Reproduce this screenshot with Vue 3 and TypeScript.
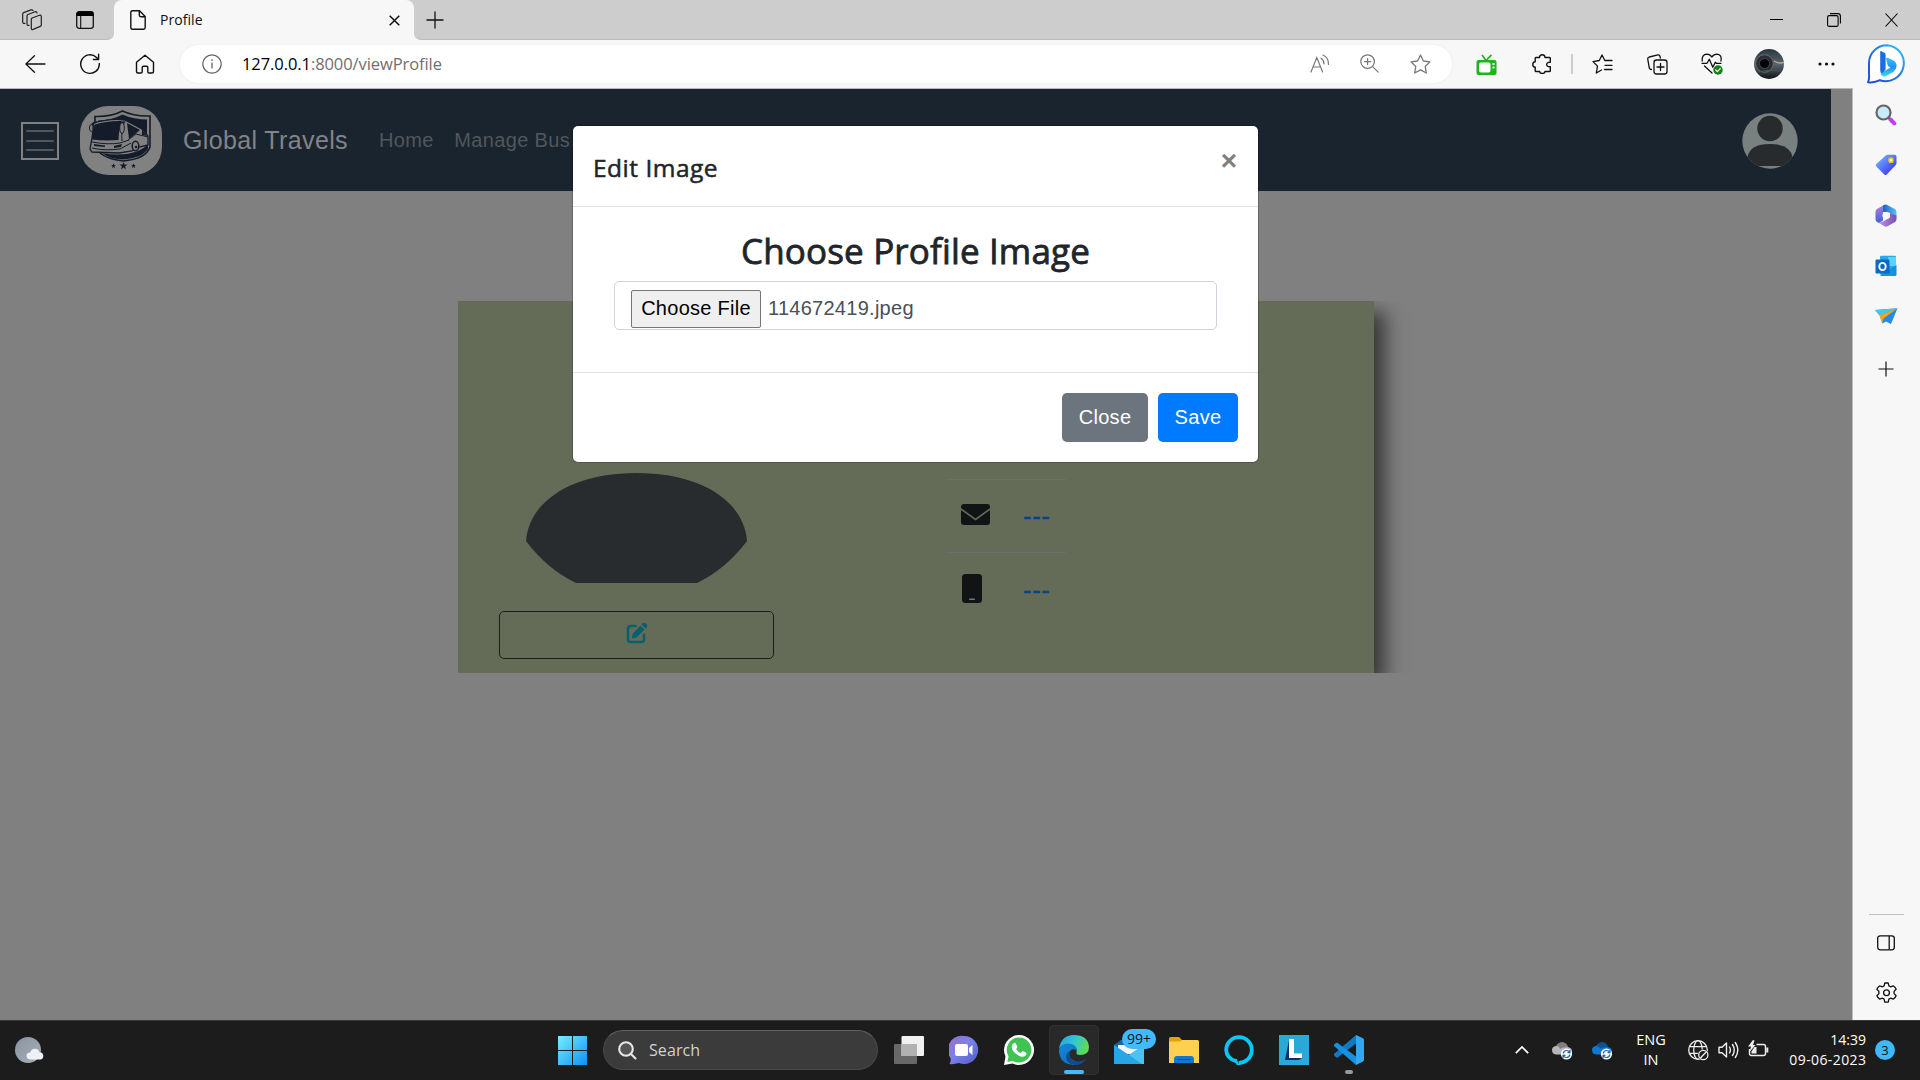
<script setup lang="ts">
interface ContactRow {
  icon: 'mail' | 'phone'
  value: string
}

const contacts: ContactRow[] = [
  { icon: 'mail', value: '---' },
  { icon: 'phone', value: '---' },
]
const navLinks: string[] = ['Home', 'Manage Bus']
const fileName = '114672419.jpeg'
</script>

<template>
  <div class="screen">
    <header class="tabstrip">
      <div class="strip-left">
        <svg class="i-spaces" width="22" height="22" viewBox="0 0 22 22" fill="none" stroke="#222" stroke-width="1.2" stroke-linejoin="round" stroke-linecap="round">
          <path d="M10.500 9.300l8-3q1.800-.5 1.800 1.200v8.500q0 1-1 1.400l-7.200 3q-1.800.6-1.800-1.200v-8.500q0-1 .8-1.400z" />
          <path d="M8 16.300q-2 .4-2-1.200V7q0-1 1-1.500l7-2.700q1.800-.5 2 1.200" />
          <path d="M4 14.300q-2.300.6-2.300-1.300V5q0-1 1-1.400L10 .900q1.500-.4 2 .7" />
        </svg>
        <svg class="i-tabs" width="18" height="18" viewBox="0 0 18 18">
          <rect x=".7" y=".7" width="16.600" height="16.600" rx="2.500" fill="none" stroke="#111" stroke-width="1.300" />
          <path d="M.5 5V3Q.5.500 3 .5h12q2.500 0 2.500 2.500v2z" fill="#000" />
          <path d="M4.700 5v12" stroke="#111" stroke-width="1.100" />
        </svg>
      </div>
      <div class="tab">
        <div class="tab-body">
          <svg width="16" height="20" viewBox="0 0 16 20" fill="none" stroke="#111" stroke-width="1.400" stroke-linejoin="round">
            <path d="M2.500.8h7L15.200 6.500V17.500q0 1.700-1.700 1.700h-11Q.8 19.200.8 17.500V2.500Q.8.800 2.500.8zM9.300.8v4.200q0 1.700 1.700 1.700h4.200" />
          </svg>
          <span class="tab-title">Profile</span>
          <svg class="tab-x" width="11" height="11" viewBox="0 0 11 11" stroke="#111" stroke-width="1.500"><path d="M.7.700l9.600 9.600M10.300.7L.7 10.300" /></svg>
        </div>
      </div>
      <div class="strip-right">
        <svg class="i-plus" width="18" height="18" viewBox="0 0 18 18" stroke="#111" stroke-width="1.300"><path d="M9 .5v17M.5 9h17" /></svg>
        <div class="window-buttons">
          <svg width="13" height="13" viewBox="0 0 13 13" stroke="#000"><path d="M0 6.500h13" /></svg>
          <svg width="14" height="14" viewBox="0 0 14 14" fill="none" stroke="#000" stroke-width="1.100"><rect x=".6" y="2.600" width="10.500" height="10.800" rx="1.500" /><path d="M3 .6h8q2.400 0 2.400 2.400v7.500" /></svg>
          <svg width="13" height="14" viewBox="0 0 13 14" stroke="#000" stroke-width="1.100"><path d="M.5.500l12 13M12.500.5l-12 13" /></svg>
        </div>
      </div>
    </header>

    <div class="toolbar">
      <svg class="t-back" width="21" height="18" viewBox="0 0 21 18" fill="none" stroke="#111" stroke-width="1.300" stroke-linecap="round" stroke-linejoin="round"><path d="M9.500.7L.9 9l8.600 8.300M1 9h19" /></svg>
      <svg class="t-reload" width="22" height="22" viewBox="0 0 22 22" fill="none" stroke="#111" stroke-width="1.400" stroke-linecap="round" stroke-linejoin="round"><path d="M20.300 10.500A9.300 9.300 0 1 1 17.500 4.400L19.500 6.300M19.600 1.300v5.200h-5.200" /></svg>
      <svg class="t-home" width="20" height="20" viewBox="0 0 20 20" fill="none" stroke="#111" stroke-width="1.400" stroke-linejoin="round"><path d="M10 1.200L1.500 8.300v9.200q0 1.500 1.500 1.500h3q1.200 0 1.200-1.200v-4.300q0-1.300 1.300-1.300h3q1.300 0 1.300 1.300v4.300q0 1.200 1.200 1.200h3q1.500 0 1.500-1.500V8.300z" /></svg>
      <div class="address">
        <svg class="a-info" width="20" height="20" viewBox="0 0 20 20" fill="none" stroke="#666" stroke-width="1.300"><circle cx="10" cy="10" r="9.200" /><path d="M10 8.500v6M10 5.300v1.700" /></svg>
        <span class="url"><b>127.0.0.1</b>:8000/viewProfile</span>
        <div class="address-icons">
          <svg width="20" height="20" viewBox="0 0 20 20" fill="none" stroke="#777" stroke-width="1.200" stroke-linecap="round"><path d="M1 18L6.800 3.500 12.600 18M3.300 13h7M11 4.200q3 1.800 3 5.800M13 1q5.800 2.500 5.500 9.500" /></svg>
          <svg width="19" height="19" viewBox="0 0 19 19" fill="none" stroke="#777" stroke-width="1.200" stroke-linecap="round"><circle cx="7.600" cy="7.600" r="6.800" /><path d="M12.700 12.700L18.200 18.200M7.600 4.500v6.200M4.500 7.600h6.200" /></svg>
          <svg width="21" height="20" viewBox="0 0 21 20" fill="none" stroke="#777" stroke-width="1.300" stroke-linejoin="round"><path d="M10.500 1l2.900 6 6.500.9-4.700 4.600 1.100 6.500-5.800-3.100L4.700 19l1.100-6.500L1.100 7.900 7.600 7z" /></svg>
        </div>
      </div>
      <div class="extensions">
        <svg class="e-tv" width="21" height="21" viewBox="0 0 21 21"><path d="M6 1l4 5.500L15.500.8" fill="none" stroke="#1db51d" stroke-width="1.700" /><rect x=".5" y="6" width="20" height="15" rx="2" fill="#1db51d" /><rect x="3" y="8.500" width="11.500" height="10" rx="2" fill="#fff" /><path d="M16.500 10h2M16.500 13.500h2" stroke="#fff" stroke-width="2" /></svg>
        <svg class="e-puzzle" width="20" height="20" viewBox="0 0 20 20" fill="none" stroke="#111" stroke-width="1.400" stroke-linejoin="round"><path d="M4 3.500h3.500Q7.500.8 10.200.8T13 3.500h4.500q.8 0 .8.800v4q-3.600-.2-3.600 2.200t3.600 2.200v4q0 .8-.8.800H13q0 2-2.700 2t-2.700-2H4q-.8 0-.8-.8v-3.500Q.8 13 .8 10.400t2.400-2.600V4.300q0-.8.800-.8z" /></svg>
        <span class="e-divider"></span>
        <svg class="e-fav" width="21" height="20" viewBox="0 0 21 20" fill="none" stroke="#111" stroke-width="1.300" stroke-linejoin="round" stroke-linecap="round"><path d="M20 6.500h-7.200L10 1 7.300 6.500 1 7.600l4.500 4.500L4.300 19l5.200-3M13 11.300h7M12.500 15.500H20" /></svg>
        <svg class="e-coll" width="21" height="21" viewBox="0 0 21 21" fill="none" stroke="#111" stroke-width="1.300" stroke-linecap="round"><path d="M4.500 15.500q-1.700 0-2.200-1.500L.8 5.300Q.500 3.500 2.200 3L11 .8q1.500-.2 2 1.500l.4 1.800" /><rect x="7" y="6" width="13" height="14" rx="2.500" /><path d="M13.500 9.500v7M10 13h7" /></svg>
        <svg class="e-heart" width="22" height="22" viewBox="0 0 22 22" fill="none" stroke="#111" stroke-width="1.300" stroke-linecap="round" stroke-linejoin="round"><path d="M1.200 8Q.5 1.500 5.800 1.200 9 1.200 10.800 4 12.800 1.200 16 1.200 21.200 1.800 20 8M1 10.300h5l2.300-4 3.500 8 2.500-5 1 1H20M3.500 13l7.500 7" /><circle cx="17" cy="17" r="4.700" fill="#128012" stroke="none" /><path d="M14.800 17l1.600 1.600 2.800-3" stroke="#fff" /></svg>
        <svg class="e-avatar" width="30" height="30" viewBox="0 0 30 30">
          <defs><linearGradient id="lens" x1="0" y1="0" x2="0" y2="1"><stop offset="0" stop-color="#293640" /><stop offset=".5" stop-color="#59666d" /><stop offset="1" stop-color="#101519" /></linearGradient></defs>
          <circle cx="15" cy="15" r="15" fill="url(#lens)" /><circle cx="10.500" cy="14.500" r="8.800" fill="#2b2e32" stroke="#6e6b69" /><circle cx="10.500" cy="14.500" r="5" fill="#020305" stroke="#445" /><path d="M20 12q4 3 10 1.500" stroke="#b2a58d" fill="none" stroke-width="1.500" /><path d="M3 23Q15 20 28 22" stroke="#45525b" fill="none" />
        </svg>
        <svg class="e-dots" width="17" height="4" viewBox="0 0 17 4" fill="#111"><circle cx="2" cy="2" r="1.600" /><circle cx="8.500" cy="2" r="1.600" /><circle cx="15" cy="2" r="1.600" /></svg>
        <svg class="e-bing" width="39" height="40" viewBox="0 0 39 40">
          <defs><linearGradient id="bing" x1="0" y1="1" x2="1" y2="0"><stop offset="0" stop-color="#2449d6" /><stop offset=".5" stop-color="#1d72e8" /><stop offset="1" stop-color="#35c8f0" /></linearGradient><linearGradient id="bingb" x1="0" y1="0" x2="0" y2="1"><stop offset="0" stop-color="#35c4f0" /><stop offset=".5" stop-color="#2591ee" /><stop offset="1" stop-color="#35dce8" /></linearGradient></defs>
          <path d="M20 1.200A18 18 0 1 1 13 36.200Q7 39 1.200 38.200 2.500 34 2 30V19A18 18 0 0 1 20 1.200z" fill="#fff" stroke="url(#bing)" stroke-width="2" />
          <path d="M19 14.800q0-1.600 1.600-1l6 2.600q3 2 3 5.500-.3 3.600-3 5.800l-8 4.600q-3 1-4.500-1.500l-.6-3 4.500-1 5.500-3.300-2.600-1.500z" fill="url(#bingb)" />
          <path d="M13.200 8q0-1.300 1.300-.8l3.200 1.800q.9.500.9 1.700V25.500l-3.600 3.800q-1.800-1-1.800-3.300z" fill="#1b6ce4" />
        </svg>
      </div>
    </div>

    <div class="browser">
      <main class="page">
        <nav class="navbar">
          <div class="menu"><i></i><i></i><i></i></div>
          <svg class="logo" width="82" height="69" viewBox="0 0 82 69">
            <rect width="82" height="69" rx="28" fill="#818181" />
            <path d="M15 16V10.500Q31 11 42.500 5 54 10.500 70 10v31Q66 53 43 55 27 53 20 47" fill="none" stroke="#151c29" stroke-width="1.600" />
            <path d="M18 14.500Q31 14.500 42.500 8.500 54 13.500 67 13.500V40l-9-15-18-9-22 1z" fill="#151c29" />
            <path d="M22 47q20 4 36-2 6-2.500 10-7v5q-6 9-25 10.500Q30 53 22 47z" fill="#151c29" />
            <path d="M14 17Q30 12 45 14l17 9 6 7v9l-9 2-7 4-13 2-27-1-2-3 2-11z" fill="#818181" stroke="#151c29" stroke-width="1.300" />
            <path d="M15 18.500q12-4 27-3.500-3 6-3.500 19Q25 35 12 33.500q0-9 3-15z" fill="#151c29" />
            <path d="M47 17l13 7-11 9zM62 24l5 6-5-1z" fill="#151c29" />
            <path d="M45 15q-4 8-3 20M48 34l8-6 12 3M12 36q16 3 28 1l9-3M12 42q12 3 28 1l11-6" fill="none" stroke="#151c29" stroke-width="1" />
            <path d="M14 38l11 1.500v1.500l-11-1zM34 40l8-2-1 3-7 1z" fill="#151c29" />
            <ellipse cx="55.500" cy="40" rx="3.300" ry="4.800" fill="#818181" stroke="#151c29" stroke-width="1.500" /><circle cx="56" cy="41" r="1.300" fill="#151c29" />
            <path d="M17 16q-6 0-6 7.500M44 16q-5 0-4 8" fill="none" stroke="#151c29" stroke-width="1.600" />
            <ellipse cx="11.300" cy="22" rx="1.800" ry="3.500" fill="#818181" stroke="#151c29" /><ellipse cx="42" cy="22" rx="2.300" ry="5.500" fill="#818181" stroke="#151c29" />
            <path d="M43.500 56l1 2.500h3l-2.400 1.900.9 3-2.500-1.800-2.500 1.800.9-3-2.400-1.900h3zM33.500 57.300l.6 1.600H36l-1.500 1.200.5 1.900-1.500-1.100-1.500 1.100.5-1.900-1.500-1.200h1.900zM53.500 57.300l.6 1.600H56l-1.500 1.200.5 1.900-1.500-1.100-1.500 1.100.5-1.900-1.500-1.200h1.900z" fill="#151c29" />
          </svg>
          <span class="brand">Global Travels</span>
          <a v-for="link in navLinks" :key="link" class="nav-link">{{ link }}</a>
          <svg class="user" width="56" height="56" viewBox="0 0 56 56">
            <defs><clipPath id="round"><circle cx="28" cy="28" r="27.700" /></clipPath></defs>
            <g clip-path="url(#round)"><rect width="56" height="56" fill="#788080" /><circle cx="28" cy="15.500" r="12.700" fill="#282b2e" /><path d="M5.500 53V44Q8 31 28 31t22.500 13v9z" fill="#282b2e" /></g>
          </svg>
        </nav>

        <div class="profile-wrap">
          <section class="profile">
            <div class="photo-col">
              <svg class="photo" width="221" height="110" viewBox="0 0 221 110"><path d="M0 68C3 28 46 0 110.500 0S218 28 221 68Q200 96 171 110H50Q21 96 0 68z" fill="#282c2f" /></svg>
              <div class="edit">
                <svg width="22" height="22" viewBox="0 0 22 22"><path d="M9.500 4H4.800Q2 4 2 6.800v10.400Q2 20 4.800 20h10.400q2.800 0 2.800-2.800v-4.500" fill="none" stroke="#07606f" stroke-width="2.500" stroke-linecap="round" /><path d="M14.500 3.500l4 4-8 8-4.700 1 1-4.800z" fill="#07606f" /><path d="M15.500 2.500l1.200-1.200q1.500-1.300 3 0l1 1q1.300 1.500 0 3l-1.200 1.200z" fill="#07606f" /></svg>
              </div>
            </div>
            <div class="contact-col">
              <div v-for="row in contacts" :key="row.icon" class="contact" :class="row.icon">
                <svg v-if="row.icon === 'mail'" width="29" height="21" viewBox="0 0 29 21" fill="#121314"><path d="M3 0h23q3 0 3 3v1L14.500 14.500 0 4V3Q0 0 3 0z" /><path d="M0 6l14.500 10.500L29 6v12q0 3-3 3H3q-3 0-3-3z" /></svg>
                <svg v-else width="20" height="29" viewBox="0 0 20 29"><rect width="20" height="29" rx="3.500" fill="#121314" /><rect x="7" y="24.500" width="6" height="1.500" rx=".7" fill="#777c6b" /></svg>
                <span>{{ row.value }}</span>
              </div>
            </div>
          </section>
        </div>

        <div class="modal">
          <div class="modal-head"><h5>Edit Image</h5><span class="modal-x">×</span></div>
          <div class="modal-body">
            <h3><span>Choose Profile Image</span></h3>
            <div class="file"><span class="file-btn">Choose File</span><span class="file-name">{{ fileName }}</span></div>
          </div>
          <div class="modal-foot"><button class="btn grey">Close</button><button class="btn blue">Save</button></div>
        </div>
      </main>

      <aside class="sidebar">
        <svg width="22" height="22" viewBox="0 0 22 22"><path d="M13 13l3 3" stroke="#555" stroke-width="2.500" /><path d="M15.500 15.500l3.800 3.800" stroke="#c23cf0" stroke-width="4" stroke-linecap="round" /><circle cx="8.500" cy="8.500" r="7" fill="#c7ebfb" stroke="#666" stroke-width="2.200" /></svg>
        <svg width="22" height="22" viewBox="0 0 22 22"><defs><linearGradient id="tag" x1="0" y1="0" x2="1" y2="1"><stop offset=".1" stop-color="#74b4ff" /><stop offset=".8" stop-color="#4040f4" /></linearGradient></defs><path d="M11 1.300Q11.600.7 13 .7h6.500q2 0 2 2V9q0 1.200-.8 2l-9 9.500q-1.200 1-2.400 0l-8-8q-1-1.200 0-2.400z" fill="url(#tag)" /><circle cx="16" cy="6.200" r="2" fill="#fff" stroke="#f6c51b" stroke-width="1.700" /></svg>
        <svg width="22" height="23" viewBox="0 0 22 23"><defs><linearGradient id="m1" x1="0" y1="0" x2="0" y2="1"><stop offset="0" stop-color="#b07ae0" /><stop offset="1" stop-color="#3f62d6" /></linearGradient><linearGradient id="m2"><stop offset="0" stop-color="#225ec4" /><stop offset="1" stop-color="#52c8f3" /></linearGradient><linearGradient id="m3"><stop offset="0" stop-color="#c58be8" /><stop offset="1" stop-color="#7251ae" /></linearGradient></defs><path d="M8 1.500L2 5Q.5 6 .5 8v7q0 2 1.500 3l2 1 4-2.500V9z" fill="url(#m1)" /><path d="M8 1.500q2.500-1.800 5 0L20 5q1.500 1 1.500 3v5L14 8.500 8 8z" fill="url(#m2)" /><path d="M21.500 11.500V15q0 2-1.500 3l-7 4q-2 1.300-4 0l-5-3 4-1.500 7-4V9z" fill="url(#m3)" /><circle cx="11" cy="11.500" r="3.600" fill="#f7f7f7" /></svg>
        <svg width="22" height="22" viewBox="0 0 22 22"><rect x="5" y=".7" width="16" height="19" rx="1" fill="#29a9e8" /><path d="M13 2h8v9h-8z" fill="#57d4fb" /><path d="M5 20.500L21.500 10v9.500q0 1.500-1.500 1.500H6z" fill="#1591df" /><rect x=".5" y="4.500" width="14" height="14" rx="1.200" fill="#0c6ac3" /><ellipse cx="7.500" cy="11.500" rx="3.200" ry="3.600" fill="none" stroke="#fff" stroke-width="1.900" /></svg>
        <svg width="23" height="16" viewBox="0 0 23 16"><path d="M0 2L22.500.2 16 16l-5-2.500-3.500 2L5 8z" fill="#2589e8" /><path d="M0 2L22.500.2 5 7.500z" fill="#44c8f2" /><path d="M22.500.2L4.500 7.500 7 15.500l1.500-5z" fill="#f2a51d" /></svg>
        <svg width="16" height="16" viewBox="0 0 16 16" stroke="#111" stroke-width="1.200"><path d="M8 .5v15M.5 8h15" /></svg>
        <div class="side-bottom">
          <hr />
          <svg width="18" height="16" viewBox="0 0 18 16" fill="none" stroke="#111" stroke-width="1.300"><rect x=".7" y=".8" width="16.600" height="14" rx="2.500" /><path d="M12.200 1v13.500" /></svg>
          <svg width="21" height="22" viewBox="0 0 21 22" fill="none" stroke="#111" stroke-width="1.300" stroke-linejoin="round"><path d="M8.800 1h3.400l.7 2.900 1.600.9 2.900-.9 1.700 1.600 1 1.700-2 2.200v2.200l2 2.200-1 1.800-1.700 1.500-2.900-.9-1.600.9-.7 3H8.800l-.7-3-1.600-.9-2.900.9-1.700-1.500-1-1.800 2-2.200V9.400l-2-2.200 1-1.700 1.700-1.600 2.900.9 1.600-.9z" /><circle cx="10.500" cy="10.700" r="2.900" /></svg>
        </div>
      </aside>
    </div>

    <footer class="taskbar">
      <svg class="weather" width="29" height="27" viewBox="0 0 29 27"><defs><linearGradient id="moon" x1="0" y1="0" x2="1" y2="1"><stop offset="0" stop-color="#8793a0" /><stop offset="1" stop-color="#a8b1ba" /></linearGradient></defs><circle cx="13" cy="13" r="13" fill="url(#moon)" /><path d="M15 22.500q-3.500-.5-3.500-3.700 0-3 3.600-3.300 1.400-4 5-3.800 3.400 0 4.300 3.500 3.900.3 3.900 3.700 0 3-3 3.600z" fill="#eef2f6" /></svg>
      <div class="apps">
        <svg class="win" width="29" height="29" viewBox="0 0 29 29"><defs><linearGradient id="win" x1="0" y1="0" x2="1" y2="1"><stop offset="0" stop-color="#76eeff" /><stop offset="1" stop-color="#0c91f5" /></linearGradient></defs><path d="M0 0h14v14H0zM15 0h14v14H15zM0 15h14v14H0zM15 15h14v14H15z" fill="url(#win)" /></svg>
        <div class="search">
          <svg width="19" height="19" viewBox="0 0 19 19" fill="#555" stroke="#e6e6e6" stroke-width="2.100" stroke-linecap="round"><circle cx="8" cy="8" r="6.800" /><path d="M13 13l4.500 4.500" /></svg>
          <span>Search</span>
        </div>
        <svg class="taskview" width="30" height="28" viewBox="0 0 30 28"><rect y="8" width="23" height="20" rx="1" fill="#686868" /><rect x="7.500" width="22.500" height="20" rx="1" fill="#f1f1f1" /><path d="M7.500 8H23v12H7.500z" fill="#b2b2b2" /></svg>
        <div class="app"><svg width="30" height="30" viewBox="0 0 30 30"><defs><linearGradient id="chat" x1="0" y1="0" x2="1" y2="1"><stop offset="0" stop-color="#9c69c3" /><stop offset=".45" stop-color="#7b83eb" /><stop offset="1" stop-color="#5059c9" /></linearGradient></defs><path d="M15 1a14 14 0 1 1-5 27Q5 29.500.5 29q1.700-3 1-6A14 14 0 0 1 15 1z" fill="url(#chat)" /><rect x="6" y="9" width="13" height="12" rx="2" fill="#fff" /><path d="M20 13l3.500-3v10L20 17z" fill="#fff" /></svg></div>
        <div class="app"><svg width="30" height="30" viewBox="0 0 30 30"><path d="M15 0a15 15 0 1 1-6.500 28.500L0 30l1.500-8.500A15 15 0 0 1 15 0z" fill="#fff" /><path d="M15 2.500A12.500 12.500 0 1 1 8.500 25.700L3.300 27l1.300-5.500A12.500 12.500 0 0 1 15 2.500z" fill="#3fc351" /><path d="M8.500 9.500q1.500-2.500 3-1.500l2 4-1.300 2q1.500 3 4.500 4l2-2 3.500 1.700q1 1-.8 3-2.700 2-7-.3Q5.500 15 8.500 9.500z" fill="#fff" /></svg></div>
        <div class="app active"><svg width="30" height="30" viewBox="0 0 30 30"><defs><linearGradient id="e1" x1="0" x2="1" y1=".2" y2=".5"><stop offset="0" stop-color="#26a4dc" /><stop offset=".5" stop-color="#31c7d5" /><stop offset="1" stop-color="#63dc4b" /></linearGradient><linearGradient id="e2" x1="0" x2="1" y1="0" y2="1"><stop offset="0" stop-color="#1688d8" /><stop offset="1" stop-color="#1068b8" /></linearGradient></defs><path d="M0 14Q2 0 15 0q14 0 15 12 0 8-9 8-4 0-3.500-2.500Q19 11 11 9 3 9 0 14z" fill="url(#e1)" /><path d="M0 15Q2 8 10 8.500q8 1 8 8-3-4-6.500-1-4 6 3 10 6 3.500 12-1Q22 30 15 30 0 29 0 15z" fill="url(#e2)" /><path d="M11.500 15.500q-3 7 3 10.500 6 2 12.500-2-4 6-11 6-9-1-9-9 1-4 4.500-5.500z" fill="#114b8e" /></svg><u></u></div>
        <div class="app mail-app"><svg width="30" height="30" viewBox="0 0 30 30"><path d="M0 10l7-5h17l6 5v19H0z" fill="#1664ab" /><path d="M4 10h23v9H4z" fill="#f4f4f4" /><path d="M0 10l15 10 15-10v19H0z" fill="#27a5e5" /><path d="M30 10v19H28L15 20z" fill="#4bc4f4" /></svg><span class="badge">99+</span></div>
        <div class="app"><svg width="30" height="30" viewBox="0 0 30 30"><path d="M0 3.500Q0 2 1.500 2H10l3 3v7H0z" fill="#e3a208" /><path d="M0 6.500h11l2-1.500h15.500Q30 5 30 6.500V28H0z" fill="#fdd04d" /><path d="M5 28v-4q0-3 3-3h14q3 0 3 3v4z" fill="#1379d0" /><path d="M8 24.500h14" stroke="#0b559c" stroke-width="1.300" /></svg></div>
        <div class="app"><svg width="30" height="30" viewBox="0 0 30 30"><path d="M12.500 26.500Q2.500 23.500 2.200 15a12.800 12.800 0 1 1 12.300 12.800" fill="none" stroke="#05c8f7" stroke-width="3.800" /><path d="M12 24l1.500 5.800 3-.1" fill="none" stroke="#05c8f7" stroke-width="2" /></svg></div>
        <div class="app"><svg width="30" height="30" viewBox="0 0 30 30"><path d="M0 0h30v30H0z" fill="#28a9d8" /><path d="M10 5L6 25h14l3-2H12z" fill="#152d64" /><path d="M10 4h5v14.500h8V23H10z" fill="#fff" /></svg></div>
        <div class="app vs"><svg width="30" height="30" viewBox="0 0 30 30"><path d="M22 0l7 3.300q1 .5 1 1.500v20q0 1.200-1 1.700L22 30z" fill="#31a8f0" /><path d="M22 0v8.500L3 23l-3-2.500V19z" fill="#1178c4" /><path d="M22 30v-8.500L3 7.500 0 9.500V11z" fill="#1690df" /></svg><u></u></div>
      </div>
      <div class="tray">
        <svg class="chev" width="14" height="8" viewBox="0 0 14 8" fill="none" stroke="#fff" stroke-width="1.700"><path d="M.8 7.200L7 1l6.200 6.200" /></svg>
        <svg v-for="tone in ['#b7b7b7', '#1277d1']" :key="tone" class="cloud" width="21" height="18" viewBox="0 0 21 18"><path d="M4 12.500q-4-.5-4-4.500 0-3.500 4-4Q6.500 0 10.500.3q4.500.7 5.500 4.700 4 1 4 4v3.500z" :fill="tone" /><path d="M4 4Q7-.500 11 .5q4 .8 5 4.500l-3.500.5Q10 5 8 7 7 4 4 4z" fill="#000" opacity=".3" /><circle cx="14.500" cy="12" r="5.600" fill="#fff" /><path d="M11 11.500q1-3 3.500-3t3.300 2M18 12.500q-1 3-3.500 3t-3.300-2M18 8v2.600h-2.500M11 16v-2.600h2.500" fill="none" stroke="#1c65ae" stroke-width="1.200" /></svg>
        <div class="lang"><span>ENG</span><span>IN</span></div>
        <svg class="globe" width="22" height="21" viewBox="0 0 22 21" fill="none" stroke="#eee" stroke-width="1.300"><circle cx="10" cy="10" r="9.300" /><ellipse cx="10" cy="10" rx="4.300" ry="9.300" /><path d="M1.500 6.700h17M1.500 13.300h10" /><circle cx="15.300" cy="15" r="5.700" fill="#1c1c1c" stroke="none" /><circle cx="15.300" cy="15" r="4.600" /><path d="M12.200 18.200l6.200-6.400" /></svg>
        <svg class="speaker" width="21" height="18" viewBox="0 0 21 18" fill="none" stroke="#eee" stroke-width="1.400" stroke-linejoin="round" stroke-linecap="round"><path d="M1 6.200h3L8.500 2v14L4 11.800H1zM11.500 6q1.800 3 0 6M14.500 3.500q3.500 5.500 0 11M17.300 1.500q5 7.500 0 15" /></svg>
        <svg class="battery" width="21" height="17" viewBox="0 0 21 17" fill="none" stroke="#eee" stroke-width="1.400"><path d="M8.500 4.500h7q2 0 2 2v7q0 2-2 2H3.500q-2 0-2-2V9" /><path d="M19.300 7.500v5" stroke-width="2" /><path d="M5 0L0 6.500h3L1.500 12 7.500 5H5l1.500-4.500z" fill="#eee" stroke="none" /><path d="M3.500 13.500v-2l3-4.500h2v6.500z" fill="#eee" stroke="none" /></svg>
        <div class="clock"><span class="time">14:39</span><span class="date">09-06-2023</span></div>
        <span class="count">3</span>
      </div>
    </footer>
  </div>
</template>

<style>
body { margin: 0; overflow: hidden; }
</style>

<style scoped>
* { box-sizing: border-box; }
svg { display: block; flex: none; }
.screen { width: 1920px; height: 1080px; display: flex; flex-direction: column; font-family: "Open Sans", "Noto Sans", sans-serif; background: #f7f7f7; overflow: hidden; }

.tabstrip { display: flex; height: 40px; flex: none; }
.strip-left { width: 114px; background: #cdcdcd; border-bottom: 1px solid #bcbcbc; border-bottom-right-radius: 7px; display: flex; align-items: center; padding-left: 21px; }
.i-tabs { margin-left: 33px; }
.tab { width: 300px; background: #cdcdcd; }
.tab-body { height: 40px; background: #f7f7f7; border-radius: 8px 8px 0 0; display: flex; align-items: center; padding-left: 16px; }
.tab-title { width: 212px; margin: -1px 0 0 14px; font-size: 14px; color: #111; white-space: nowrap; line-height: 20px; letter-spacing: .05px; }
.tab-x { margin-left: 17px; margin-top: 1px; }
.strip-right { flex: 1; background: #cdcdcd; border-bottom: 1px solid #bcbcbc; border-bottom-left-radius: 7px; display: flex; align-items: center; padding: 0 22px 0 12px; }
.window-buttons { margin-left: auto; display: flex; align-items: center; gap: 44px; }

.toolbar { height: 48px; flex: none; display: flex; align-items: center; }
.t-back { margin-left: 25px; margin-top: -1px; }
.t-reload { margin-left: 33px; margin-top: -1px; }
.t-home { margin-left: 34px; margin-top: -1px; }
.address { width: 1272px; height: 38px; margin-left: 25px; background: #fff; border-radius: 19px; display: flex; align-items: center; padding-left: 22px; box-shadow: 0 0 3px rgba(0, 0, 0, .06); }
.a-info { margin-top: -1px; }
.url { margin: -2px 0 0 20px; font-size: 16.500px; letter-spacing: -.08px; color: #6f6f6f; white-space: nowrap; }
.url b { font-weight: 400; color: #000; }
.address-icons { display: flex; align-items: center; margin: -1px 21px 0 auto; gap: 31px; }
.address-icons svg:first-child { margin-right: -1px; }
.extensions { display: flex; align-items: center; }
.e-tv { margin-left: 24px; }
.e-puzzle { margin-left: 35px; margin-top: -1px; }
.e-divider { width: 2px; height: 20px; background: #ccc; margin-left: 19px; }
.e-fav { margin-left: 19px; margin-top: -1px; }
.e-coll { margin-left: 34px; }
.e-heart { margin-left: 33px; }
.e-avatar { margin-left: 31px; }
.e-dots { margin-left: 34px; }
.e-bing { margin-left: 32px; }

.browser { height: 932px; flex: none; display: flex; }
.page { position: relative; width: 1853px; background: #808080; border-top: 1px solid #b9b9b9; border-right: 1px solid #bdbdbd; font-family: "Liberation Sans", Arial, sans-serif; }
.navbar { width: 1831px; height: 102px; background: #1a242e; display: flex; align-items: center; padding-left: 21px; }
.menu { width: 38px; height: 38px; margin-top: 1px; border: 2px solid #818181; display: flex; flex-direction: column; align-items: center; justify-content: center; gap: 7.500px; }
.menu i { width: 28px; height: 2px; border-radius: 1px; background: #50575e; }
.logo { margin-left: 21px; }
.brand { width: 174px; margin-left: 21px; font-size: 25px; color: #818488; letter-spacing: .37px; white-space: nowrap; }
.nav-link { margin-left: 20.500px; font-size: 20px; color: #50575d; white-space: nowrap; letter-spacing: .35px; }
.brand + .nav-link { margin-left: 22px; }
.user { margin: 1px 33px 0 auto; }

.profile-wrap { margin: 110px 0 0 458px; width: 956px; height: 372px; overflow: hidden; }
.profile { width: 916px; height: 372px; background: #646c57; box-shadow: 11px 11px 18px #383838; display: flex; }
.photo-col { width: 275px; margin-left: 41px; padding-top: 172px; }
.photo { margin: 0 auto; }
.edit { height: 48px; margin-top: 28px; border: 1px solid #1b1d20; border-radius: 5px; display: flex; justify-content: center; padding-top: 10px; }
.contact-col { width: 120px; margin: 178px 0 0 172px; }
.contact { height: 73px; border-top: 1px solid #6c6f6d; padding-left: 15px; display: flex; }
.contact svg { margin-top: 24px; }
.contact span { margin: 21px 0 0 33px; font-size: 26px; line-height: 30px; letter-spacing: .5px; color: #064587; -webkit-text-stroke: .3px #064587; }
.contact.phone svg { margin: 21px 0 0 1px; }
.contact.phone span { margin: 22px 0 0 41px; }

.modal { position: absolute; left: 573px; top: 37px; width: 685px; height: 336px; background: #fff; border-radius: 5px; box-shadow: 0 0 0 1px rgba(0, 0, 0, .2); color: #212529; }
.modal-head { height: 81px; border-bottom: 1px solid #dee2e6; display: flex; justify-content: space-between; padding: 21px 21px 0 20px; }
h5, h3 { margin: 0; font-family: "Open Sans", "Noto Sans", sans-serif; font-weight: 500; -webkit-text-stroke: .5px #212529; }
h5 { font-size: 24.500px; line-height: 42px; letter-spacing: .5px; }
.modal-x { font-size: 28px; line-height: 28px; font-weight: 700; color: #808080; }
.modal-body { height: 166px; border-bottom: 1px solid #dee2e6; padding: 23px 41px 0; }
h3 { font-size: 35px; line-height: 42px; text-align: center; letter-spacing: .15px; white-space: nowrap; -webkit-text-stroke-width: .8px; }
.file { height: 49px; margin-top: 9px; border: 1px solid #ced4da; border-radius: 5px; display: flex; padding: 8px 0 0 16px; font-size: 20px; letter-spacing: .27px; }
.file-btn { width: 130px; height: 38px; border: 1px solid #767676; border-radius: 2px; background: #efefef; color: #000; text-align: center; line-height: 34px; }
.file-name { margin-left: 7px; line-height: 36px; color: #495057; }
.modal-foot { display: flex; justify-content: flex-end; gap: 10px; padding: 20px 20px 0; }
.btn { height: 49px; border: 0; border-radius: 5px; color: #fff; font: 20px "Liberation Sans", Arial, sans-serif; letter-spacing: .3px; padding: 0; }
.grey { width: 86px; background: #6c757d; }
.blue { width: 80px; background: #007bff; }

.sidebar { flex: 1; display: flex; flex-direction: column; align-items: center; padding: 16px 1px 0 0; }
.sidebar > svg { margin-bottom: 28px; }
.sidebar > svg:nth-child(5) { margin: 3px 0 37px; }
.side-bottom { margin-top: auto; display: flex; flex-direction: column; align-items: center; padding-bottom: 16px; }
.side-bottom hr { width: 35px; height: 1px; border: 0; background: #bdbdbd; margin: 0 0 20px; }
.side-bottom svg + svg { margin-top: 31px; }

.taskbar { position: relative; height: 60px; background: #1c1c1c; border-top: 1px solid #383838; display: flex; align-items: center; color: #fff; padding-bottom: 1px; }
.weather { margin-left: 15px; }
.apps { display: flex; align-items: center; margin-left: 514px; }
.search { width: 275px; height: 40px; margin-left: 16px; border-radius: 20px; background: #3b3b3b; border: 1px solid #484848; border-top-color: #626262; display: flex; align-items: center; padding-left: 14px; }
.search span { margin-left: 12px; font-size: 16px; color: #d2d2d2; letter-spacing: .1px; }
.taskview { margin: 0 15px 0 16px; }
.app { position: relative; width: 50px; height: 50px; margin-right: 5px; display: flex; align-items: center; justify-content: center; border-radius: 5px; }
.active { background: #292929; box-shadow: inset 0 0 0 1px #313131; }
.app u { position: absolute; bottom: 1px; left: 15px; width: 20px; height: 4px; border-radius: 2px; background: #45b9fb; }
.vs u { left: 21px; width: 8px; background: #999; }
.badge { position: absolute; left: 18px; top: 4px; width: 34px; height: 20px; border-radius: 10px; background: #42baff; color: #111; font-size: 14px; line-height: 20px; text-align: center; }
.tray { margin-left: auto; display: flex; align-items: center; }
.chev { margin-right: 23px; }
.cloud { margin-right: 19px; margin-top: 2px; }
.lang { width: 40px; margin-left: -1px; display: flex; flex-direction: column; align-items: center; font-size: 14.500px; line-height: 20px; }
.globe { margin-left: 17px; }
.speaker { margin-left: 8px; }
.battery { margin-left: 9px; margin-top: -3px; }
.clock { width: 97px; display: flex; flex-direction: column; align-items: flex-end; font-size: 14px; line-height: 20px; white-space: nowrap; }
.date { letter-spacing: .4px; margin-right: -.4px; }
.count { width: 20px; height: 20px; margin: 0 25px 0 9px; border-radius: 50%; background: #3db9fc; color: #111; font-size: 13px; line-height: 20px; text-align: center; }
</style>
